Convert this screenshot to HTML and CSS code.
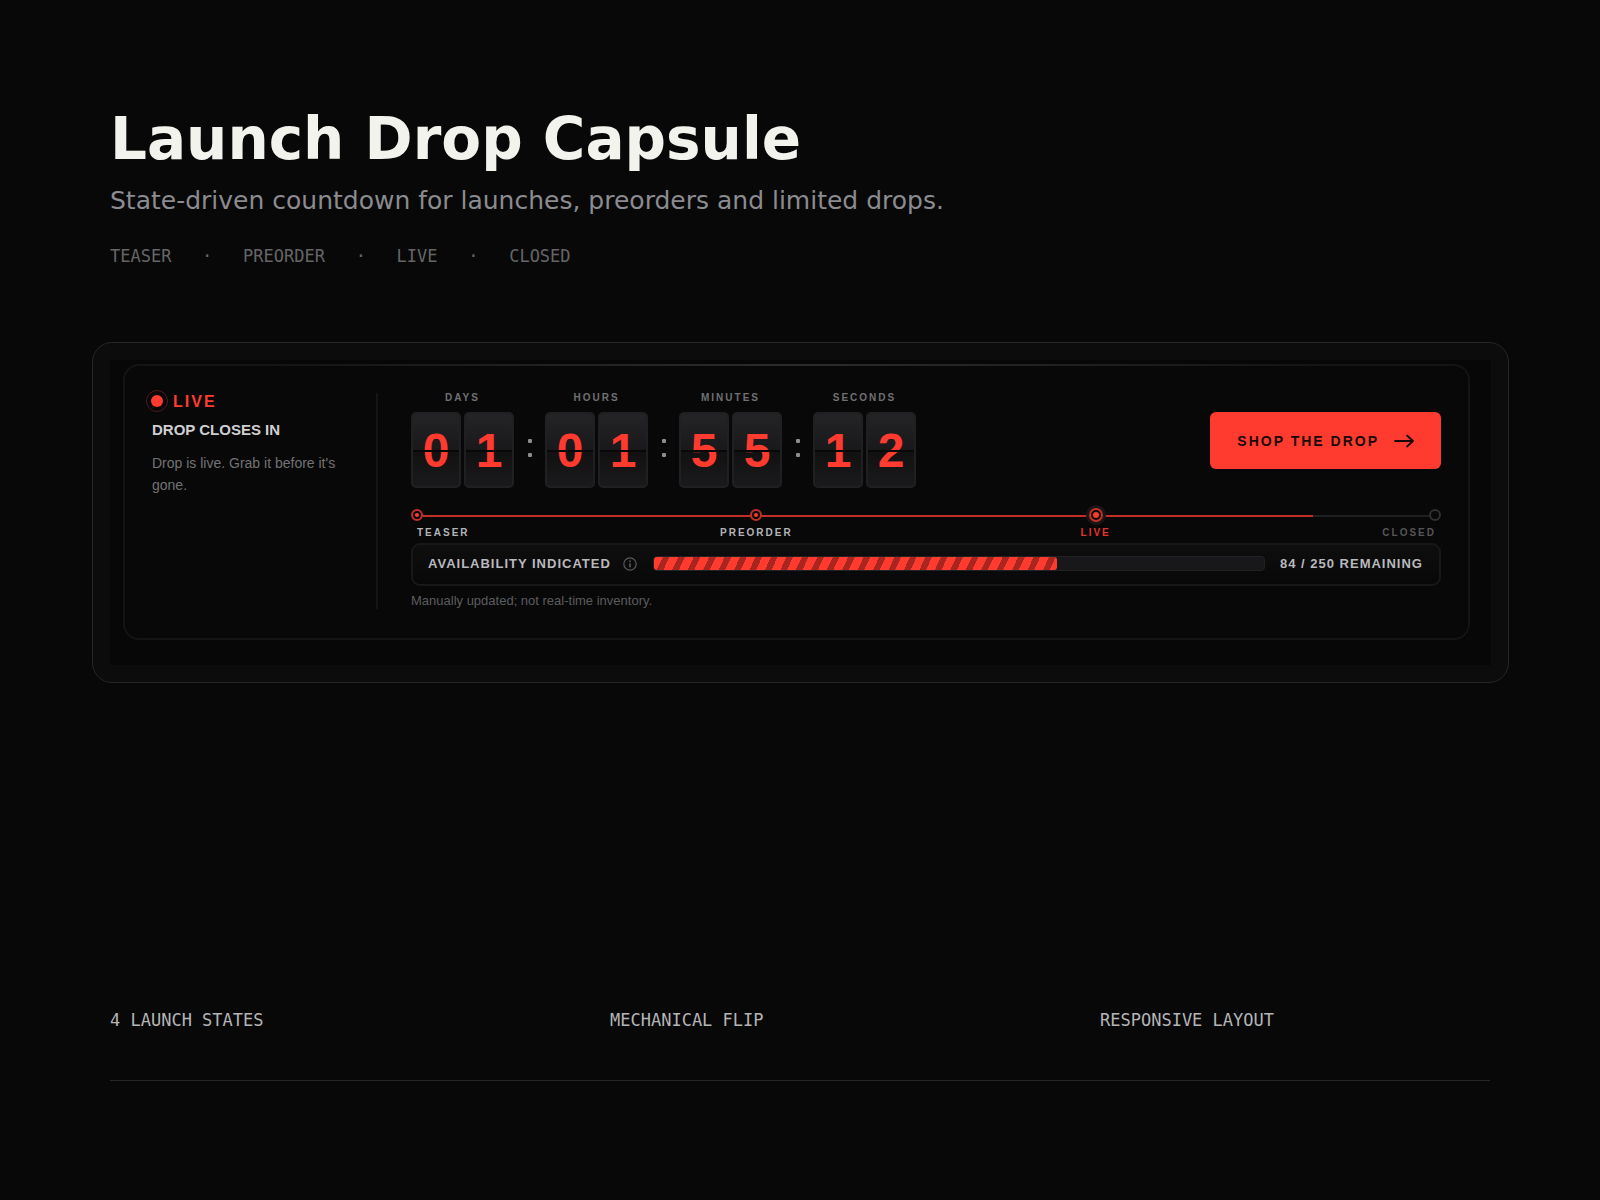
FILE: index.html
```html
<!DOCTYPE html>
<html lang="en">
<head>
<meta charset="utf-8">
<meta name="viewport" content="width=device-width, initial-scale=1">
<title>Launch Drop Capsule</title>
<link rel="stylesheet" href="styles.css">
</head>
<body>
<header class="intro">
  <h1 class="title">Launch Drop Capsule</h1>
  <p class="subtitle">State-driven countdown for launches, preorders and limited drops.</p>
  <p class="states">TEASER   ·   PREORDER   ·   LIVE   ·   CLOSED</p>
</header>

<main class="frame">
  <div class="stage">
    <section class="capsule">
      <div class="status">
        <p class="status-live"><span class="pulse"></span>LIVE</p>
        <h2 class="status-title">DROP CLOSES IN</h2>
        <p class="status-text">Drop is live. Grab it before it's gone.</p>
      </div>

      <div class="content">
        <div class="top">
          <div class="clock" role="timer">
            <div class="unit"><span class="unit-label">DAYS</span><div class="tiles"><span class="tile">0</span><span class="tile">1</span></div></div>
            <div class="colon"><i></i><i></i></div>
            <div class="unit"><span class="unit-label">HOURS</span><div class="tiles"><span class="tile">0</span><span class="tile">1</span></div></div>
            <div class="colon"><i></i><i></i></div>
            <div class="unit"><span class="unit-label">MINUTES</span><div class="tiles"><span class="tile">5</span><span class="tile">5</span></div></div>
            <div class="colon"><i></i><i></i></div>
            <div class="unit"><span class="unit-label">SECONDS</span><div class="tiles"><span class="tile">1</span><span class="tile">2</span></div></div>
          </div>
          <button class="cta" type="button">SHOP THE DROP
            <svg width="20" height="14" viewBox="0 0 20 14" fill="none" stroke="currentColor" stroke-width="1.8" stroke-linecap="round" stroke-linejoin="round" aria-hidden="true"><path d="M1 7h18M13 1.500 19 7l-6 5.500"/></svg>
          </button>
        </div>

        <div class="timeline">
          <div class="rail"><div class="rail-fill"></div></div>
          <ol class="steps">
            <li class="step done"><span class="node"></span><span class="step-label">TEASER</span></li>
            <li class="step done"><span class="node"></span><span class="step-label">PREORDER</span></li>
            <li class="step current"><span class="node"></span><span class="step-label">LIVE</span></li>
            <li class="step"><span class="node"></span><span class="step-label">CLOSED</span></li>
          </ol>
        </div>

        <div class="stock">
          <span class="stock-label" id="stock-label">AVAILABILITY INDICATED</span>
          <svg class="info" width="14" height="14" viewBox="0 0 14 14" fill="none" stroke="currentColor" aria-hidden="true"><circle cx="7" cy="7" r="6.200" stroke-width="1.200"/><path d="M7 6.200v4M7 3.600v1.400" stroke-width="1.600"/></svg>
          <div class="bar" role="progressbar" aria-labelledby="stock-label" aria-valuemin="0" aria-valuemax="250" aria-valuenow="166"><div class="bar-fill" style="width:66%"></div></div>
          <span class="stock-count">84 / 250 REMAINING</span>
        </div>
        <p class="note">Manually updated; not real-time inventory.</p>
      </div>
    </section>
  </div>
</main>

<footer class="features">
  <span>4 LAUNCH STATES</span>
  <span>MECHANICAL FLIP</span>
  <span>RESPONSIVE LAYOUT</span>
</footer>
</body>
</html>
```
FILE: styles.css
```css
* { box-sizing: border-box; }

:root {
  --bg: #080808;
  --red: #ff3b30;
  --line: #18181a;
  --sans: "Liberation Sans", Arial, sans-serif;
  --mono: "DejaVu Sans Mono", monospace;
}

body {
  margin: 0;
  min-height: 100vh;
  padding: 105px 110px 119px;
  display: flex;
  flex-direction: column;
  background: var(--bg);
  color: #f3f3ee;
  font-family: "DejaVu Sans", sans-serif;
}

h1, h2, p, ol { margin: 0; padding: 0; }

.title { font-size: 58px; line-height: 68px; font-weight: 700; }
.subtitle { margin-top: 12px; font-size: 25px; line-height: 32px; color: #8b8b90; }
.states {
  margin-top: 28px;
  font: 17px/22px var(--mono);
  color: #656567;
  white-space: pre-wrap;
}

/* Outer frame and capsule */
.frame {
  margin: 75px -19px 0 -18px;
  padding: 17px;
  border: 1px solid #262628;
  border-radius: 20px;
  background: #0c0c0c;
}
.stage { padding: 4px 21px 25px 13px; background: #070707; }
.capsule {
  position: relative;
  display: flex;
  padding: 27px 27px 29px;
  border: 2px solid #141416;
  border-radius: 16px;
  background: var(--bg);
  font-family: var(--sans);
}
.capsule::before {
  content: "";
  position: absolute;
  top: -2px;
  left: 10%;
  right: 10%;
  height: 2px;
  background: linear-gradient(90deg, transparent, #2c2c2e, transparent);
}

/* Status column */
.status {
  flex: 0 0 226px;
  padding-right: 32px;
  border-right: 2px solid #151517;
}
.status-live {
  display: flex;
  align-items: center;
  gap: 5px;
  margin-left: -6px;
  color: var(--red);
  font-size: 16px;
  line-height: 18px;
  font-weight: 700;
  letter-spacing: 2px;
}
.pulse {
  display: grid;
  place-items: center;
  width: 22px;
  height: 22px;
  margin: -4px 0 -2px;
  border: 1px solid #4a1d1b;
  border-radius: 50%;
}
.pulse::before {
  content: "";
  width: 12px;
  height: 12px;
  border-radius: 50%;
  background: var(--red);
}
.status-title {
  margin-top: 10px;
  font-size: 15px;
  line-height: 18px;
  color: #cfcfd2;
}
.status-text {
  margin-top: 13px;
  font-size: 14px;
  line-height: 22px;
  color: #727275;
}

.content { flex: 1; min-width: 0; padding-left: 33px; }
.top { display: flex; justify-content: space-between; align-items: flex-start; }

/* Flip clock */
.clock { display: flex; align-items: flex-end; }
.unit-label {
  display: block;
  margin-bottom: 9px;
  text-align: center;
  font-size: 10px;
  line-height: 10px;
  font-weight: 700;
  letter-spacing: 2px;
  color: #707073;
}
.tiles { display: flex; gap: 3px; }
.tile {
  position: relative;
  width: 50px;
  height: 76px;
  border: 2px solid #202022;
  border-radius: 5px;
  background: linear-gradient(#242427, #19191b 50%, #111112 51%, #1a1a1c);
  color: var(--red);
  font-size: 48px;
  line-height: 74px;
  font-weight: 700;
  text-align: center;
}
.tile::after {
  content: "";
  position: absolute;
  left: 0;
  right: 0;
  top: 36px;
  height: 2px;
  background: #080808;
}
.colon {
  display: flex;
  flex-direction: column;
  align-items: center;
  justify-content: center;
  gap: 10px;
  width: 31px;
  height: 76px;
  padding-bottom: 4px;
}
.colon i { width: 4px; height: 4px; border-radius: 1px; background: #8b8b90; }

.cta {
  display: flex;
  align-items: center;
  gap: 15px;
  height: 57px;
  margin-top: 19px;
  padding: 0 27px;
  border: 0;
  border-radius: 6px;
  background: var(--red);
  color: #170807;
  font: 700 14px/18px var(--sans);
  letter-spacing: 2px;
}

/* Launch timeline */
.timeline { position: relative; margin-top: 20px; }
.rail {
  position: absolute;
  top: 7px;
  left: 6px;
  right: 6px;
  height: 2px;
  background: #202022;
}
.rail-fill { width: 88%; height: 100%; background: #c22f27; }
.steps {
  position: relative;
  display: flex;
  justify-content: space-between;
  list-style: none;
}
.step {
  display: flex;
  flex-direction: column;
  align-items: center;
  gap: 5px;
  width: 12px;
  color: #555558;
}
.step:first-child { align-items: flex-start; }
.step:last-child { align-items: flex-end; }
.step:first-child .node, .step:last-child .node { align-self: center; }
.step:first-child .step-label { margin-left: 6px; }
.step:last-child .step-label { margin-right: 5px; }
.node {
  display: grid;
  place-items: center;
  flex: none;
  width: 12px;
  height: 12px;
  margin: 1px 0;
  border: 2px solid #303032;
  border-radius: 50%;
  background: var(--bg);
}
.step-label {
  font-size: 10px;
  line-height: 12px;
  font-weight: 700;
  letter-spacing: 2px;
  white-space: nowrap;
}
.done { color: #b4b4b8; }
.done .node { border-color: #c22f27; }
.done .node::before, .current .node::before {
  content: "";
  width: 4px;
  height: 4px;
  border-radius: 50%;
  background: var(--red);
}
.current { color: #e0352b; }
.current .node {
  width: 14px;
  height: 14px;
  margin: 0;
  border-color: #c22f27;
  box-shadow: 0 0 0 3px #1c1516;
}
.current .node::before { width: 6px; height: 6px; }

/* Availability */
.stock {
  display: flex;
  align-items: center;
  height: 43px;
  margin-top: 4px;
  padding: 0 16px 2px 15px;
  border: 2px solid var(--line);
  border-radius: 9px;
  background: linear-gradient(#0e0e0f, var(--bg));
  font-size: 13px;
  font-weight: 700;
  letter-spacing: 1px;
  color: #b9b9bd;
  white-space: nowrap;
}
.info { flex: none; margin: 0 16px 0 12px; color: #59595c; }
.bar {
  flex: 1;
  height: 15px;
  border: 1px solid #222225;
  border-radius: 4px;
  background: #18181a;
}
.bar-fill {
  height: 100%;
  border-radius: 3px;
  background: repeating-linear-gradient(115deg, var(--red) 0 8px, #a8261f 8px 14px);
}
.stock-count { margin-left: 15px; }
.note {
  margin-top: 7px;
  font-size: 13px;
  line-height: 16px;
  color: #5c5c5f;
}

/* Feature strip */
.features {
  display: grid;
  grid-template-columns: 50fr 49fr 39fr;
  margin-top: auto;
  padding-bottom: 49px;
  border-bottom: 1px solid #262628;
  font: 17px/22px var(--mono);
  color: #b4b4b6;
}
```
